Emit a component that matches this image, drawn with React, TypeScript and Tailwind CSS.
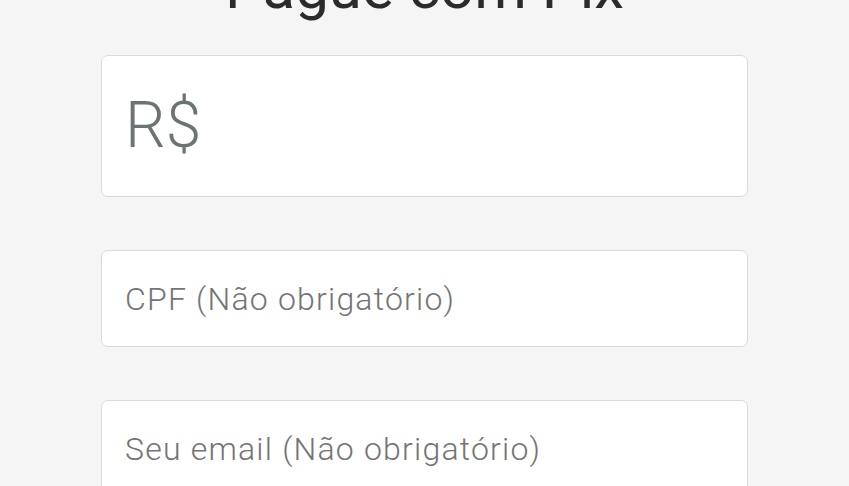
import React from 'react';

const Field: React.FC<{ placeholder: string }> = ({ placeholder }) => (
  <div className="flex h-[97px] items-center rounded-[7px] border border-[#dadada] bg-white pl-[23px]">
    <span className="text-[32px] font-light tracking-[1.2px] text-[#747474]">{placeholder}</span>
  </div>
);

const App: React.FC = () => {
  return (
    <div
      className="h-[486px] w-[849px] overflow-hidden bg-[#f5f5f5]"
      style={{ fontFamily: 'Roboto, "Noto Sans", sans-serif' }}
    >
      <h1 className="-mt-[42px] mb-[37px] text-center text-[60px] font-normal leading-none text-[#2b2b2b]">
        Pague com Pix
      </h1>
      <div className="mx-[101px] flex flex-col gap-[53px]">
        <div className="flex h-[142px] items-center rounded-[7px] border border-[#dadada] bg-white pl-[23px]">
          <span className="text-[64px] font-light leading-none text-[#6b7474]">R$</span>
        </div>
        <Field placeholder="CPF (Não obrigatório)" />
        <Field placeholder="Seu email (Não obrigatório)" />
      </div>
    </div>
  );
};

export default App;
